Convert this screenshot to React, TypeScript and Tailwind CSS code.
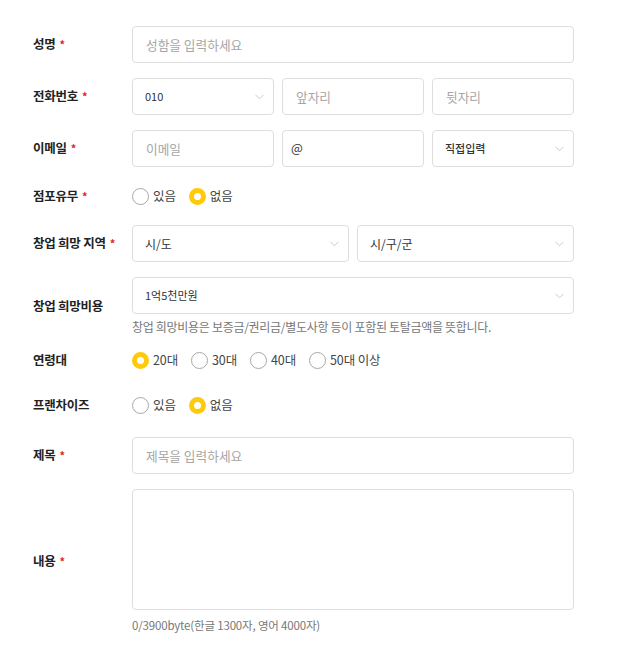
import React, { useState } from 'react';

const FONT = "font-['Noto_Sans_CJK_KR','Noto_Sans',sans-serif]";

const Chevron = () => (
    <svg width="9" height="6" viewBox="0 0 9 6" className="shrink-0">
        <polyline points="0.5,0.8 4.5,4.8 8.5,0.8" fill="none" stroke="#cacaca" strokeWidth="1" />
    </svg>
);

const Label = ({ text, required }: { text: string; required?: boolean }) => (
    <div className="w-[99px] shrink-0 text-[12.5px] font-bold text-[#222] tracking-[-0.02em] flex items-center">
        <span>{text}</span>
        {required && <span className="text-[#e8202a] ml-1 text-[11px]">*</span>}
    </div>
);

const TextBox = ({ placeholder, className = '' }: { placeholder: string; className?: string }) => (
    <div className={`h-[37px] border border-[#dedede] rounded-[4px] flex items-center px-[13px] text-[12.7px] text-[#a6a6a6] bg-white ${className}`}>
        {placeholder}
    </div>
);

const SelectBox = ({ value, className = '', textClass = 'text-[11px]' }: { value: string; className?: string; textClass?: string }) => (
    <div className={`h-[37px] border border-[#dedede] rounded-[4px] flex items-center justify-between pl-[12px] pr-[9px] bg-white ${className}`}>
        <span className={`${textClass} text-[#333]`}>{value}</span>
        <Chevron />
    </div>
);

const Radio = ({ label, checked, onClick }: { label: string; checked: boolean; onClick: () => void }) => (
    <button type="button" onClick={onClick} className="flex items-center gap-[4px] mr-[13px]">
        {checked ? (
            <span className="w-[17px] h-[17px] rounded-full border-[5px] border-[#ffca0a] bg-white" />
        ) : (
            <span className="w-[17px] h-[17px] rounded-full border border-[#a8a8a8] bg-white" />
        )}
        <span className="text-[12.5px] text-[#444] tracking-[-0.01em]">{label}</span>
    </button>
);

const RadioGroup = ({ options, initial }: { options: string[]; initial: number }) => {
    const [sel, setSel] = useState(initial);
    return (
        <div className="flex items-center">
            {options.map((o, i) => (
                <Radio key={o} label={o} checked={sel === i} onClick={() => setSel(i)} />
            ))}
        </div>
    );
};

const App = () => {
    return (
        <div className={`bg-white w-[618px] min-h-[645px] pt-[26px] pl-[33px] ${FONT}`}>
            <div className="w-[541px] flex flex-col">
                {/* 성명 */}
                <div className="flex">
                    <Label text="성명" required />
                    <TextBox placeholder="성함을 입력하세요" className="flex-1" />
                </div>

                {/* 전화번호 */}
                <div className="flex mt-[15px]">
                    <Label text="전화번호" required />
                    <div className="flex-1 grid grid-cols-3 gap-[8px]">
                        <SelectBox value="010" />
                        <TextBox placeholder="앞자리" />
                        <TextBox placeholder="뒷자리" />
                    </div>
                </div>

                {/* 이메일 */}
                <div className="flex mt-[15px]">
                    <Label text="이메일" required />
                    <div className="flex-1 grid grid-cols-3 gap-[8px]">
                        <TextBox placeholder="이메일" />
                        <div className="h-[37px] border border-[#dedede] rounded-[4px] flex items-center px-[8px] text-[12.5px] text-[#333]">@</div>
                        <SelectBox value="직접입력" textClass="text-[11px] font-medium" />
                    </div>
                </div>

                {/* 점포유무 */}
                <div className="flex h-[28px] mt-[15px]">
                    <Label text="점포유무" required />
                    <RadioGroup options={['있음', '없음']} initial={1} />
                </div>

                {/* 창업 희망 지역 */}
                <div className="flex mt-[15px]">
                    <Label text="창업 희망 지역" required />
                    <div className="flex-1 grid grid-cols-2 gap-[8px]">
                        <SelectBox value="시/도" textClass="text-[12px]" />
                        <SelectBox value="시/구/군" textClass="text-[12px]" />
                    </div>
                </div>

                {/* 창업 희망비용 */}
                <div className="flex mt-[15px]">
                    <Label text="창업 희망비용" />
                    <div className="flex-1 flex flex-col">
                        <SelectBox value="1억5천만원" />
                        <p className="mt-[4px] leading-[18px] text-[12px] text-[#777] tracking-[-0.025em]">
                            창업 희망비용은 보증금/권리금/별도사항 등이 포함된 토탈금액을 뜻합니다.
                        </p>
                    </div>
                </div>

                {/* 연령대 */}
                <div className="flex h-[28px] mt-[10px]">
                    <Label text="연령대" />
                    <RadioGroup options={['20대', '30대', '40대', '50대 이상']} initial={0} />
                </div>

                {/* 프랜차이즈 */}
                <div className="flex h-[28px] mt-[17px]">
                    <Label text="프랜차이즈" />
                    <RadioGroup options={['있음', '없음']} initial={1} />
                </div>

                {/* 제목 */}
                <div className="flex mt-[18px]">
                    <Label text="제목" required />
                    <TextBox placeholder="제목을 입력하세요" className="flex-1" />
                </div>

                {/* 내용 */}
                <div className="flex mt-[15px]">
                    <Label text="내용" required />
                    <div className="flex-1 flex flex-col">
                        <textarea className="h-[121px] border border-[#dedede] rounded-[4px] resize-none outline-none p-3 text-[12px]" />
                        <p className="mt-[6px] leading-[18px] text-[11.5px] text-[#777] tracking-[-0.015em]">
                            0/3900byte(한글 1300자, 영어 4000자)
                        </p>
                    </div>
                </div>
            </div>
        </div>
    );
};

export default App;
